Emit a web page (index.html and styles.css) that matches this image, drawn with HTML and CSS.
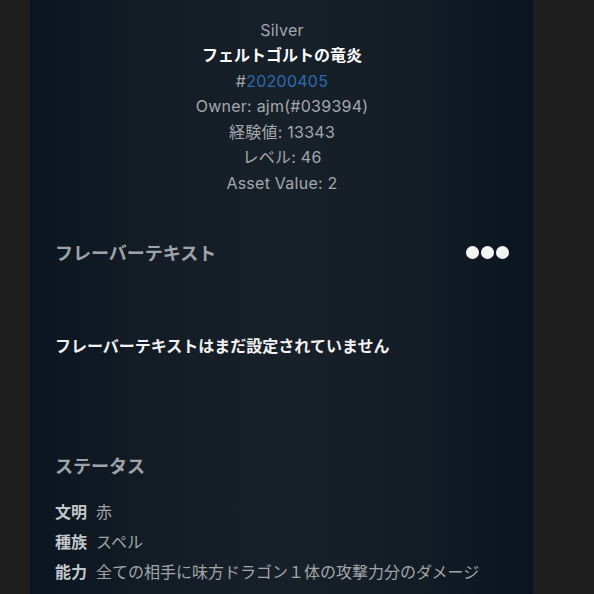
FILE: index.html
```html
<!DOCTYPE html>
<html lang="ja">
<head>
  <meta charset="UTF-8">
  <meta name="viewport" content="width=device-width, initial-scale=1.0">
  <title>フェルトゴルトの竜炎</title>
  <link rel="stylesheet" href="styles.css">
</head>
<body>
  <div class="panel">
    <div class="card-info">
      <div>Silver</div>
      <div class="card-name">フェルトゴルトの竜炎</div>
      <div>#<span class="card-id">20200405</span></div>
      <div>Owner: ajm(#039394)</div>
      <div>経験値: 13343</div>
      <div>レベル: 46</div>
      <div>Asset Value: 2</div>
    </div>

    <div class="section-head">
      <h2>フレーバーテキスト</h2>
      <div class="more-dots">
        <span></span><span></span><span></span>
      </div>
    </div>
    <p class="flavor-text">フレーバーテキストはまだ設定されていません</p>

    <div class="section-head status-head">
      <h2>ステータス</h2>
    </div>
    <div class="status-list">
      <div class="status-row"><span class="status-label">文明</span><span class="status-value">赤</span></div>
      <div class="status-row"><span class="status-label">種族</span><span class="status-value">スペル</span></div>
      <div class="status-row"><span class="status-label">能力</span><span class="status-value">全ての相手に味方ドラゴン１体の攻撃力分のダメージ</span></div>
    </div>
  </div>
</body>
</html>
```

FILE: styles.css
```css
body {
  margin: 0;
  background: #1e1e1e;
  font-family: 'Inter', 'Noto Sans CJK JP', sans-serif;
  font-size: 16px;
  color: #a3a8ad;
}

.panel {
  margin-left: 30px;
  width: 503px;
  min-height: 100vh;
  box-sizing: border-box;
  padding: 17.5px 24px 0 25px;
  background: linear-gradient(to right, #0b1520 0%, #141d26 25%, #18212a 50%, #141d26 75%, #0a1420 100%);
  overflow: hidden;
}

.card-info {
  text-align: center;
  line-height: 25.5px;
  letter-spacing: 0.25px;
}

.card-name {
  color: #ffffff;
  font-weight: 700;
  letter-spacing: 0;
}

.card-id {
  color: #2c6ab3;
}

.section-head {
  display: flex;
  justify-content: space-between;
  align-items: center;
  height: 26px;
  margin-top: 43px;
}

.section-head h2 {
  margin: 0;
  font-size: 18px;
  font-weight: 700;
  color: #9ea3a8;
}

.more-dots {
  display: flex;
  gap: 2px;
}

.more-dots span {
  width: 13px;
  height: 13px;
  border-radius: 50%;
  background: #f4f4f4;
}

.flavor-text {
  margin: 69px 0 0;
  line-height: 24px;
  font-weight: 700;
  color: #f2f2f2;
}

.status-head {
  margin-top: 94px;
}

.status-list {
  margin-top: 19px;
}

.status-row {
  display: flex;
  gap: 9px;
  line-height: 30px;
}

.status-label {
  font-weight: 700;
  color: #c3c7cb;
}

.status-value {
  color: #a0a5aa;
}
```
